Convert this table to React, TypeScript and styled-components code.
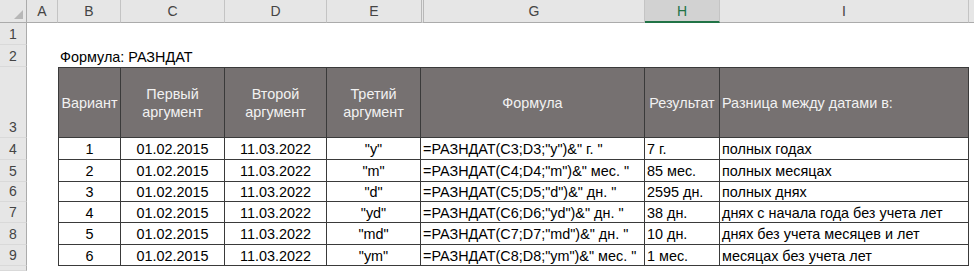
import React from 'react';
import styled, { createGlobalStyle } from 'styled-components';

const Global = createGlobalStyle`
  html, body { margin: 0; padding: 0; background: #ffffff; }
  body { font-family: "Liberation Sans", Arial, sans-serif; }
  #root { width: 974px; height: 271px; overflow: hidden; }
`;

const Sheet = styled.div`
  display: grid;
  grid-template-columns: 27px 31px 63px 104px 102px 94px 224px 75px 249px 1fr;
  grid-template-rows: 23px 22px 22px 71px 22px 22px 20px 21px 22px 21px 1fr;
  width: 974px;
  height: 271px;
  overflow: hidden;
  font-size: 14.4px;
  color: #000;
`;

const Corner = styled.div`
  background: #e6e6e6;
  border-right: 1px solid #ababab;
  border-bottom: 1px solid #ababab;
  box-sizing: border-box;
  display: flex;
  align-items: flex-end;
  justify-content: flex-end;
  padding: 0 3px 3px 0;
`;

const ColHead = styled.div<{ $selected?: boolean; $hiddenBefore?: boolean; $noRight?: boolean }>`
  box-sizing: border-box;
  background: ${p => (p.$selected ? '#d2d2d2' : '#e6e6e6')};
  color: ${p => (p.$selected ? '#217346' : '#444444')};
  border-right: ${p => (p.$noRight ? 'none' : '1px solid #c4c4c4')};
  border-left: ${p => (p.$hiddenBefore ? '3px double #b8b8b8' : 'none')};
  border-bottom: ${p => (p.$selected ? '2px solid #217346' : '1px solid #ababab')};
  display: flex;
  align-items: center;
  justify-content: center;
  font-size: 14px;
  padding-top: ${p => (p.$selected ? '1px' : '0')};
`;

const RowHead = styled.div`
  box-sizing: border-box;
  background: #e6e6e6;
  color: #444444;
  border-right: 1px solid #ababab;
  border-bottom: 1px solid #d9d9d9;
  display: flex;
  align-items: flex-end;
  justify-content: center;
  font-size: 14px;
  padding-bottom: 2px;
`;

const Blank = styled.div`
  box-sizing: border-box;
`;

const Title = styled.div`
  box-sizing: border-box;
  display: flex;
  align-items: flex-end;
  padding: 0 0 2px 2px;
  white-space: nowrap;
  overflow: visible;
  position: relative;
  z-index: 1;
`;

const HeadCell = styled.div<{ $first?: boolean; $align?: 'left' | 'center' }>`
  box-sizing: border-box;
  background: #767171;
  color: #f2f2f2;
  border-top: 1px solid #3a3a3a;
  border-right: 1px solid #3a3a3a;
  border-bottom: 1px solid #3a3a3a;
  border-left: ${p => (p.$first ? '1px solid #3a3a3a' : 'none')};
  display: flex;
  align-items: center;
  justify-content: ${p => (p.$align === 'left' ? 'flex-start' : 'center')};
  text-align: ${p => (p.$align === 'left' ? 'left' : 'center')};
  padding: 0 0 0 ${p => (p.$align === 'left' ? '2px' : '0')};
  line-height: 18px;
  white-space: pre-line;
`;

const DataCell = styled.div<{ $first?: boolean; $align?: 'left' | 'center' }>`
  box-sizing: border-box;
  background: #ffffff;
  border-right: 1px solid #3a3a3a;
  border-bottom: 1px solid #3a3a3a;
  border-left: ${p => (p.$first ? '1px solid #3a3a3a' : 'none')};
  display: flex;
  align-items: center;
  justify-content: ${p => (p.$align === 'left' ? 'flex-start' : 'center')};
  padding: 1px 0 0 ${p => (p.$align === 'left' ? '2px' : '0')};
  white-space: nowrap;
  overflow: hidden;
`;

const TriangleSvg = () => (
  <svg width="9" height="9" viewBox="0 0 9 9">
    <polygon points="9,0 9,9 0,9" fill="#b7b7b7" />
  </svg>
);

const letters = ['A', 'B', 'C', 'D', 'E', 'G', 'H', 'I'];

const headers: { text: string; align: 'left' | 'center' }[] = [
  { text: 'Вариант', align: 'center' },
  { text: 'Первый\nаргумент', align: 'center' },
  { text: 'Второй\nаргумент', align: 'center' },
  { text: 'Третий\nаргумент', align: 'center' },
  { text: 'Формула', align: 'center' },
  { text: 'Результат', align: 'center' },
  { text: 'Разница между датами в:', align: 'left' },
];

const rows = [
  ['1', '01.02.2015', '11.03.2022', '"y"', '=РАЗНДАТ(C3;D3;"y")&" г. "', '7 г.', 'полных годах'],
  ['2', '01.02.2015', '11.03.2022', '"m"', '=РАЗНДАТ(C4;D4;"m")&" мес. "', '85 мес.', 'полных месяцах'],
  ['3', '01.02.2015', '11.03.2022', '"d"', '=РАЗНДАТ(C5;D5;"d")&" дн. "', '2595 дн.', 'полных днях'],
  ['4', '01.02.2015', '11.03.2022', '"yd"', '=РАЗНДАТ(C6;D6;"yd")&" дн. "', '38 дн.', 'днях с начала года без учета лет'],
  ['5', '01.02.2015', '11.03.2022', '"md"', '=РАЗНДАТ(C7;D7;"md")&" дн. "', '10 дн.', 'днях без учета месяцев и лет'],
  ['6', '01.02.2015', '11.03.2022', '"ym"', '=РАЗНДАТ(C8;D8;"ym")&" мес. "', '1 мес.', 'месяцах без учета лет'],
];

const alignFor = (i: number): 'left' | 'center' => (i >= 4 ? 'left' : 'center');

export default function App() {
  return (
    <>
      <Global />
      <Sheet>
        <Corner>
          <TriangleSvg />
        </Corner>
        {letters.map(l => (
          <ColHead key={l} $selected={l === 'H'} $hiddenBefore={l === 'G'} $noRight={l === 'E'}>
            {l}
          </ColHead>
        ))}
        <ColHead $noRight />

        <RowHead>1</RowHead>
        {Array.from({ length: 9 }).map((_, i) => (
          <Blank key={`r1-${i}`} />
        ))}

        <RowHead>2</RowHead>
        <Blank />
        <Title>Формула: РАЗНДАТ</Title>
        {Array.from({ length: 7 }).map((_, i) => (
          <Blank key={`r2-${i}`} />
        ))}

        <RowHead>3</RowHead>
        <Blank />
        {headers.map((h, i) => (
          <HeadCell key={`h-${i}`} $first={i === 0} $align={h.align}>
            {h.text}
          </HeadCell>
        ))}
        <Blank />

        {rows.map((r, ri) => (
          <React.Fragment key={`row-${ri}`}>
            <RowHead>{ri + 4}</RowHead>
            <Blank />
            {r.map((v, ci) => (
              <DataCell key={`d-${ri}-${ci}`} $first={ci === 0} $align={alignFor(ci)}>
                {v}
              </DataCell>
            ))}
            <Blank />
          </React.Fragment>
        ))}

        <RowHead />
      </Sheet>
    </>
  );
}
